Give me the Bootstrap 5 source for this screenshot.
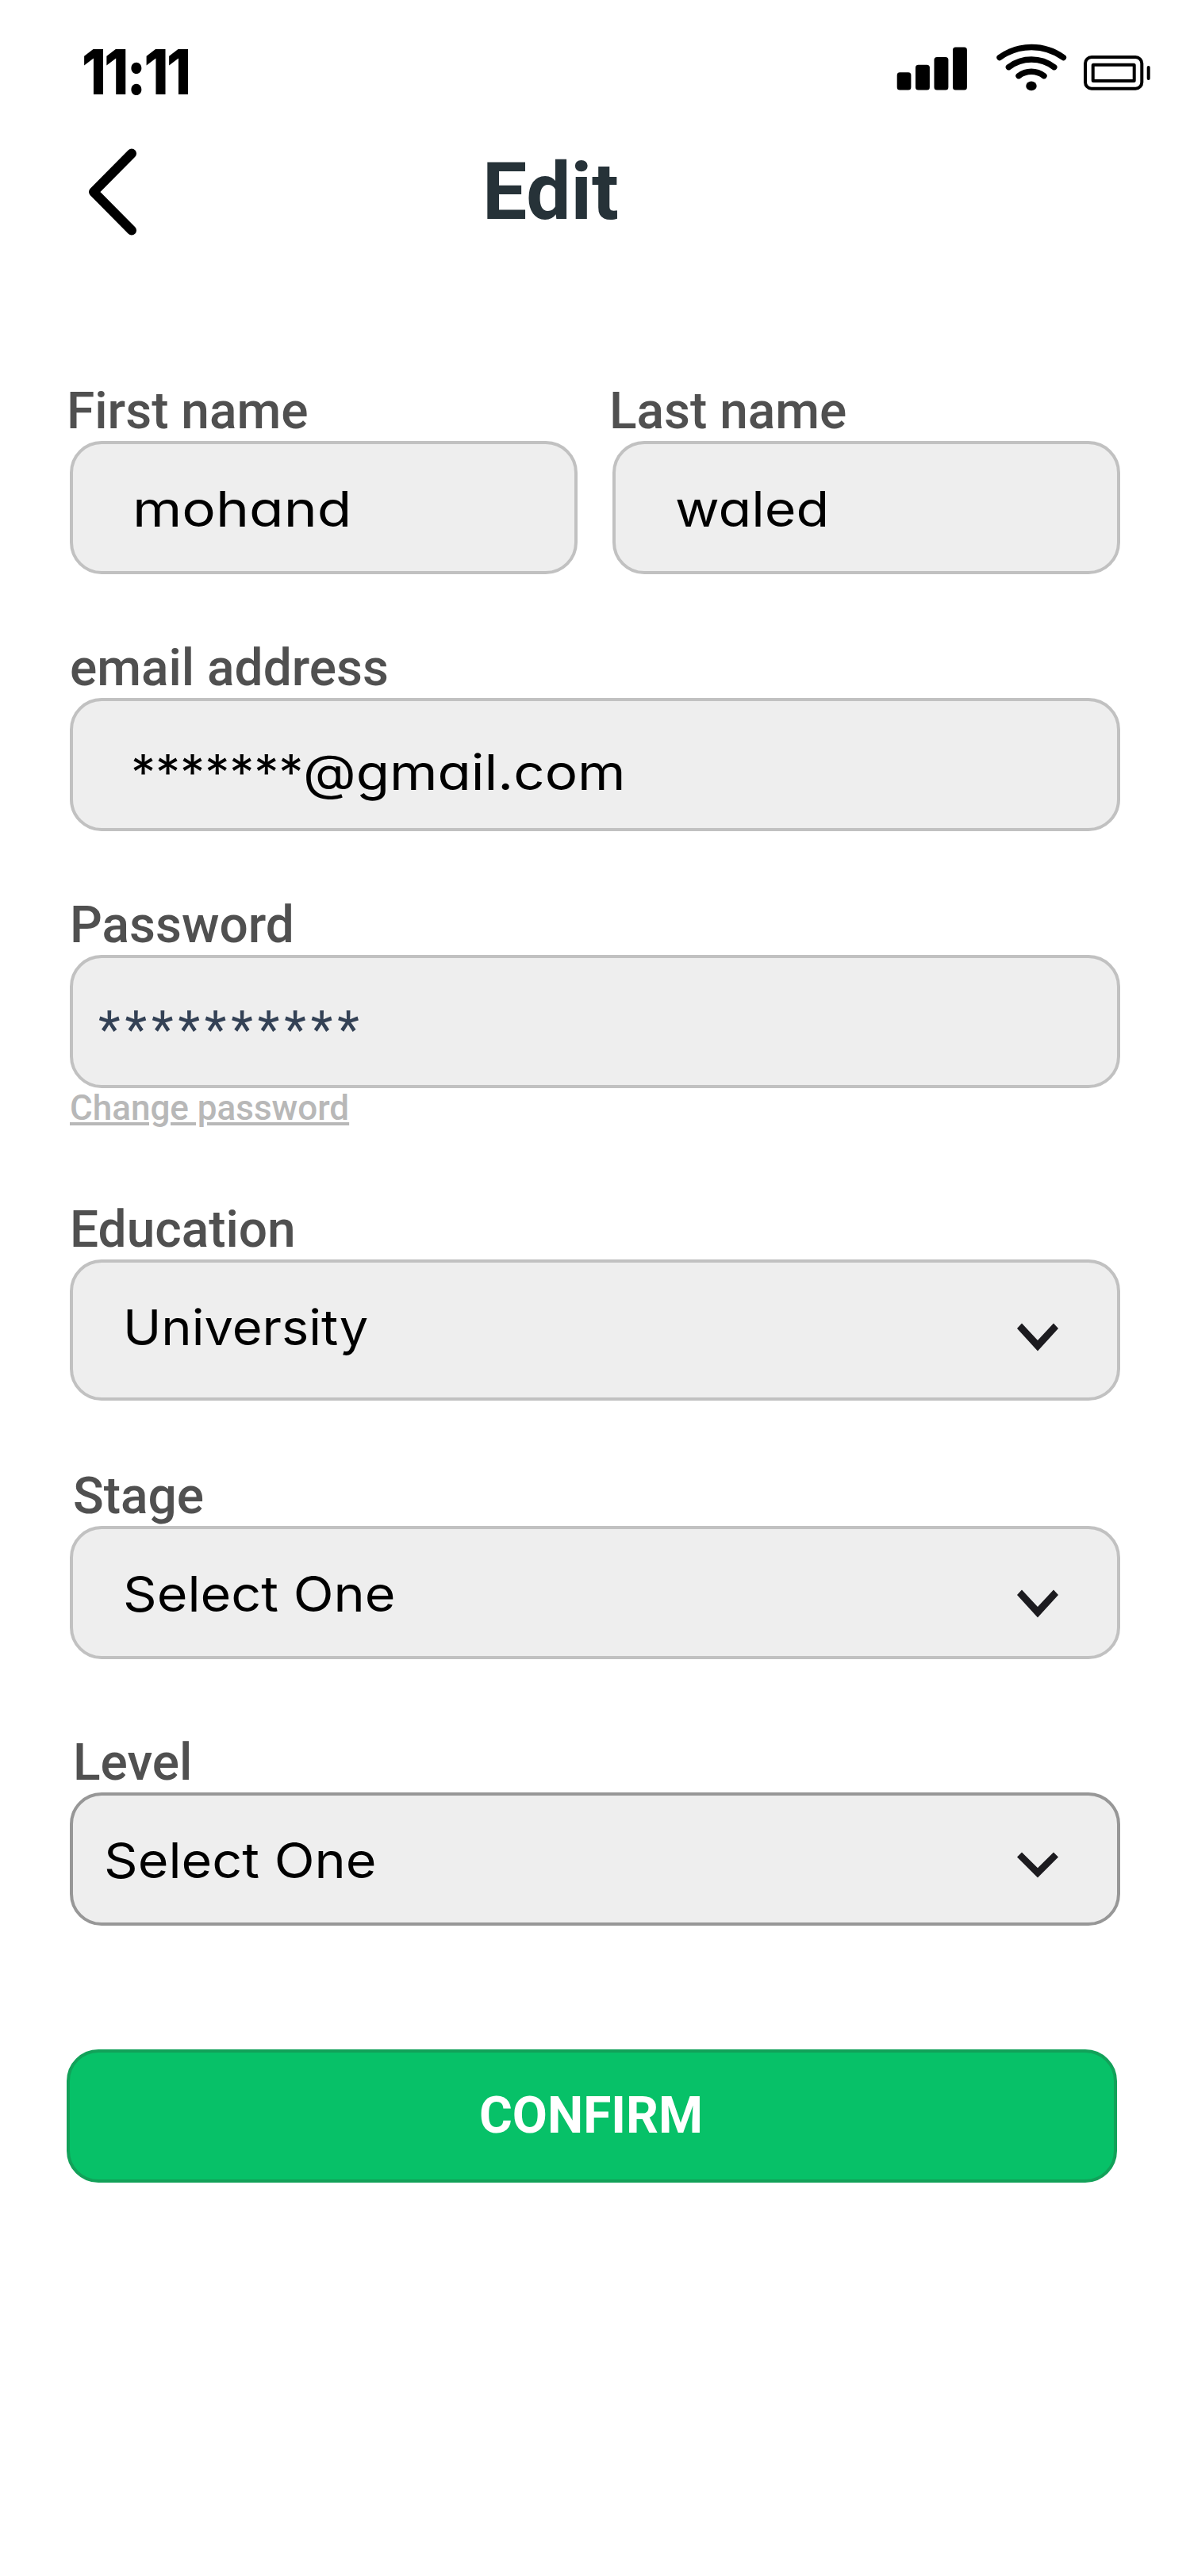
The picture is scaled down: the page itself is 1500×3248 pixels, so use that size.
<!DOCTYPE html>
<html lang="en">
<head>
<meta charset="utf-8">
<meta name="viewport" content="width=device-width, initial-scale=1">
<title>Edit</title>
<link href="https://cdn.jsdelivr.net/npm/bootstrap@5.3.0/dist/css/bootstrap.min.css" rel="stylesheet">
<style>
  body { font-family: Roboto, sans-serif; background: #fff; color: #000; }
  .screen { width: 1500px; height: 3248px; overflow: hidden; }
  .status-bar { height: 160px; padding: 44px 50px 0 103px; }
  .clock { font: 800 78px/94px Inter, sans-serif; letter-spacing: -3px; transform: scaleX(.9); transform-origin: left; }
  .status-icons { width: 320px; height: 64px; margin-top: 8px; }
  .title-bar { height: 321px; padding: 23px 0 0 112px; }
  .back-icon { width: 62px; height: 110px; margin-top: 4px; }
  .page-title { font-size: 100px; line-height: 117px; font-weight: 700; color: #263238; margin-left: 434px; }
  .edit-form { padding: 0 88px; }
  .field-label { font-size: 64px; line-height: 75px; font-weight: 500; color: #505050; }
  .shift-left { margin-left: -4px; }
  .shift-right { margin-left: 4px; }
  .name-row { gap: 44px; }
  .field-box { height: 168px; border: 4px solid #c1c1c1; border-radius: 40px; background: #eee; color: #000; padding: 44px 74px 0 75px; font: 400 62px/75px Inter, sans-serif; font-feature-settings: "cv11"; white-space: nowrap; }
  .field-box.email { padding: 52px 0 0 73px; }
  .field-box.secret { padding: 53px 0 0 32px; font-family: Roboto, sans-serif; font-size: 64px; letter-spacing: 5.9px; color: #334155; }
  .field-box.picker { padding-left: 63px; }
  .field-box.tall { height: 178px; }
  .field-box.level { padding-left: 39px; border-color: #979797; }
  .wide { display: inline-block; transform-origin: left; transform: scaleX(var(--sx, 1)); }
  .w-first { --sx: 1.148; }
  .w-last { --sx: 1.1; }
  .w-mail { --sx: 1.114; }
  .w-uni { --sx: 1.048; }
  .w-select { --sx: 1.072; }
  .arrow { width: 52px; height: 36px; margin-top: 32px; }
  .level .arrow { margin-top: 27px; height: 33px; }
  .gap-field { margin-top: 81px; }
  .change-link { font-size: 44px; line-height: 52px; font-weight: 500; color: #b8b8b8; margin-top: -1px; text-decoration: underline; }
  .gap-education { margin-top: 90px; }
  .gap-stage { margin-top: 83px; }
  .gap-level { margin-top: 93px; }
  .confirm-btn { width: 1324px; height: 168px; margin: 156px 0 0 -4px; border: 4px solid #12a159; border-radius: 40px; background: #07c168; font-size: 64px; line-height: 75px; font-weight: 700; padding: 0 2px 2px 0; color: #fff; }
</style>
</head>
<body>
<main class="screen">
  <header>
    <div class="status-bar d-flex justify-content-between align-items-start">
      <div class="clock">11:11</div>
      <svg class="status-icons" viewBox="1130 52 320 64">
        <rect x="1130.7" y="91.3" width="17.7" height="22.2" rx="3.5"/>
        <rect x="1154" y="81.7" width="17.9" height="31.8" rx="3.5"/>
        <rect x="1177.5" y="72" width="17.9" height="41.5" rx="3.5"/>
        <rect x="1201" y="59.6" width="17.9" height="53.9" rx="3.5"/>
        <g fill="none" stroke="#000" stroke-width="7.4" stroke-linecap="round">
          <path d="M1260 72.500a68.700 68.700 0 0 1 80.400 0"/>
          <path d="M1271.400 84.700a47.300 47.300 0 0 1 57.400 0"/>
          <path d="M1284 95.700a26.400 26.400 0 0 1 32 0"/>
        </g>
        <ellipse cx="1300" cy="108.4" rx="6.7" ry="5.9"/>
        <g fill="none" stroke="#000" stroke-width="4">
          <rect x="1368" y="72" width="71.3" height="39.8" rx="8"/>
          <rect x="1377.7" y="81.7" width="52" height="20.3" rx="0.5"/>
          <path d="M1447.700 85v14" stroke-linecap="round"/>
        </g>
      </svg>
    </div>
    <div class="title-bar d-flex align-items-start">
      <svg class="back-icon" viewBox="112 187 62 110" fill="none" stroke="#000" stroke-width="12" stroke-linecap="round" stroke-linejoin="round"><path d="M166 193.500 118 242l48 48.500"/></svg>
      <h1 class="page-title mb-0">Edit</h1>
    </div>
  </header>
  <form class="edit-form">
    <div class="d-flex name-row">
      <div class="flex-fill w-50">
        <div class="field-label shift-left">First name</div>
        <div class="field-box"><span class="wide w-first">mohand</span></div>
      </div>
      <div class="flex-fill w-50">
        <div class="field-label shift-left">Last name</div>
        <div class="field-box"><span class="wide w-last">waled</span></div>
      </div>
    </div>
    <div class="gap-field">
      <div class="field-label">email address</div>
      <div class="field-box email"><span>*******</span><span class="wide w-mail">@gmail.com</span></div>
    </div>
    <div class="gap-field">
      <div class="field-label">Password</div>
      <div class="field-box secret">**********</div>
      <a class="change-link d-block">Change password</a>
    </div>
    <div class="gap-education">
      <div class="field-label">Education</div>
      <div class="field-box picker tall d-flex justify-content-between align-items-start"><span class="wide w-uni">University</span>
        <svg class="arrow" viewBox="0 0 52 36" preserveAspectRatio="none"><path d="M0 7 6 .5 26 22 46 .5l6 6.500-26 28.500z" fill="#1c1b1f"/></svg></div>
    </div>
    <div class="gap-stage">
      <div class="field-label shift-right">Stage</div>
      <div class="field-box picker d-flex justify-content-between align-items-start"><span class="wide w-select">Select One</span>
        <svg class="arrow" viewBox="0 0 52 36" preserveAspectRatio="none"><path d="M0 7 6 .5 26 22 46 .5l6 6.500-26 28.500z" fill="#1c1b1f"/></svg></div>
    </div>
    <div class="gap-level">
      <div class="field-label shift-right">Level</div>
      <div class="field-box picker level d-flex justify-content-between align-items-start"><span class="wide w-select">Select One</span>
        <svg class="arrow" viewBox="0 0 52 36" preserveAspectRatio="none"><path d="M0 7 6 .5 26 22 46 .5l6 6.500-26 28.500z" fill="#1c1b1f"/></svg></div>
    </div>
    <button type="button" class="btn confirm-btn">CONFIRM</button>
  </form>
</main>
<script src="https://cdn.jsdelivr.net/npm/bootstrap@5.3.0/dist/js/bootstrap.bundle.min.js"></script>
</body>
</html>
